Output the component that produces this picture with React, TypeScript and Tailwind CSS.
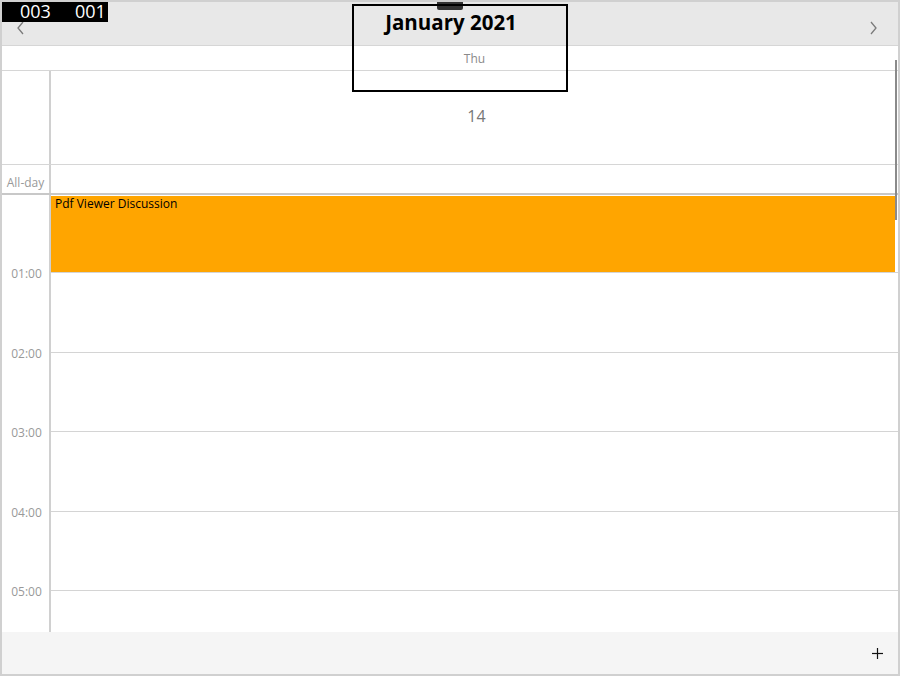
const hours = [
  { label: "01:00", h: "h-[78px]" },
  { label: "02:00", h: "h-[80px]" },
  { label: "03:00", h: "h-[79px]" },
  { label: "04:00", h: "h-[80px]" },
  { label: "05:00", h: "h-[79px]" },
  { label: "", h: "h-[80px]" },
];

function Chevron({ dir }: { dir: "left" | "right" }) {
  return (
    <svg width="10" height="14" viewBox="0 0 10 14" className="text-[#7a7a7a]">
      <polyline
        points={dir === "left" ? "7,1 2,7 7,13" : "3,1 8,7 3,13"}
        fill="none"
        stroke="currentColor"
        strokeWidth="1.3"
      />
    </svg>
  );
}

export default function App() {
  return (
    <div
      className="relative flex h-[676px] w-[900px] flex-col overflow-hidden border-2 border-[#d0d0d0] bg-white"
      style={{ fontFamily: '"Open Sans", "Noto Sans", sans-serif' }}
    >
      {/* header */}
      <header className="grid h-[44px] shrink-0 grid-cols-[1fr_auto_1fr] items-center border-b border-[#d6d6d6] bg-[#e8e8e8] pl-[14px] pr-[20px]">
        <div className="pt-[8px]">
          <Chevron dir="left" />
        </div>
        <h1 className="pb-[2px] pl-[8px] text-[20.5px] font-bold text-black">January 2021</h1>
        <div className="flex justify-end pt-[8px]">
          <Chevron dir="right" />
        </div>
      </header>

      {/* day name */}
      <div className="grid h-[25px] shrink-0 grid-cols-[49px_1fr] border-b border-[#d6d6d6]">
        <div />
        <div className="flex items-center justify-center pt-[1px] text-[12px] text-[#8a8a8a]">
          Thu
        </div>
      </div>

      {/* date */}
      <div className="grid h-[94px] shrink-0 grid-cols-[49px_1fr] border-b border-[#d6d6d6]">
        <div className="border-r-2 border-[#d0d0d0]" />
        <div className="flex items-center justify-center pb-[3px] pl-[4px] text-[16px] text-[#777]">
          14
        </div>
      </div>

      {/* all day */}
      <div className="grid h-[30px] shrink-0 grid-cols-[49px_1fr] border-b-2 border-[#c8c8c8]">
        <div className="flex items-end justify-center border-r-2 border-[#d0d0d0] pb-[1px] text-[12px] text-[#999]">
          All-day
        </div>
        <div />
      </div>

      {/* time grid */}
      <div className="relative min-h-0 flex-1 overflow-hidden">
        {hours.map((row, i) => (
          <div key={i} className={`relative grid ${row.h} grid-cols-[49px_1fr]`}>
            <div className="border-r-2 border-[#d0d0d0]" />
            <div className="relative border-b border-[#d4d4d4]">
              {i === 0 && (
                <div className="absolute inset-y-0 left-0 right-[3px] top-[1px] bg-[#ffa500] px-[4px] text-[12px] leading-[16px] text-black">
                  Pdf Viewer Discussion
                </div>
              )}
            </div>
            {row.label && (
              <span className="absolute bottom-0 left-0 w-[49px] translate-y-[55%] text-center text-[12px] leading-none text-[#999]">
                {row.label}
              </span>
            )}
          </div>
        ))}
      </div>

      {/* footer */}
      <footer className="flex h-[42px] shrink-0 items-center justify-end bg-[#f5f5f5] pr-[15px]">
        <svg width="11" height="11" viewBox="0 0 11 11">
          <line x1="5.5" y1="0" x2="5.5" y2="11" stroke="#111" strokeWidth="1.2" />
          <line x1="0" y1="5.5" x2="11" y2="5.5" stroke="#111" strokeWidth="1.2" />
        </svg>
      </footer>

      {/* scrollbar */}
      <div className="absolute right-[1px] top-[58px] h-[160px] w-[2px] bg-[#8a8a8a]" />

      {/* counter overlay */}
      <div className="absolute -left-[2px] -top-[2px] flex h-[22px] w-[108px] items-center gap-[24px] bg-black pl-[20px] text-[18px] leading-none text-white">
        <span>003</span>
        <span>001</span>
      </div>

      {/* tab */}
      <div className="absolute -top-[2px] left-[435px] flex h-[10px] w-[26px] items-center justify-center rounded-b-[2px] bg-[#333]">
        <div className="h-[1px] w-[16px] bg-[#bbb]" />
      </div>

      {/* focus rect */}
      <div className="absolute left-[350px] top-[2px] h-[88px] w-[216px] border-2 border-black" />
    </div>
  );
}
